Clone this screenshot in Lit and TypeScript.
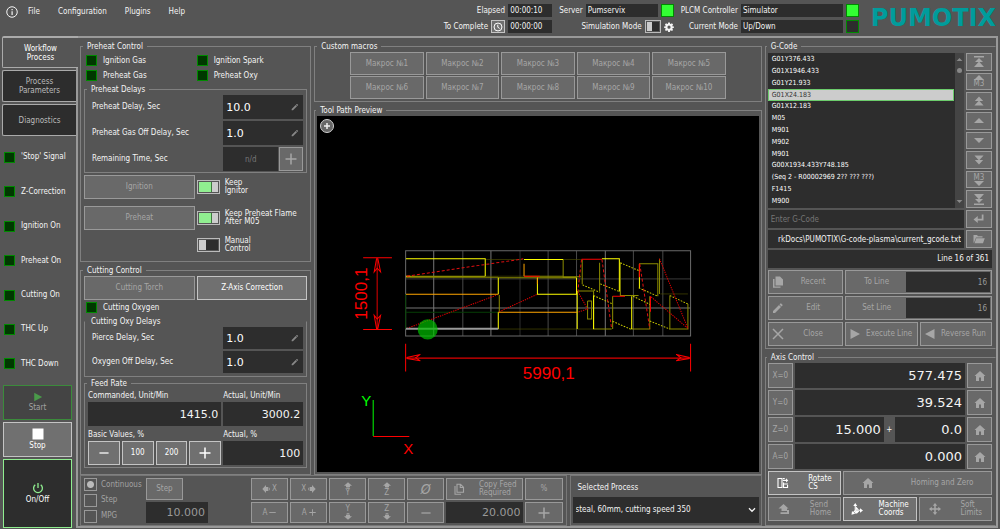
import { LitElement, html, css, svg } from "lit";
import { customElement, state } from "lit/decorators.js";
import { classMap } from "lit/directives/class-map.js";

const shapes: Record<string, unknown> = {
  info: svg`<circle cx="12" cy="12" r="10.5" fill="none" stroke="currentColor" stroke-width="2"/><path d="M11 10.5h2.4V18H11zM11 6h2.4v2.5H11z"/>`,
  clock: svg`<circle cx="12" cy="12" r="9.5" fill="none" stroke="currentColor" stroke-width="2.4"/><path d="M11.5 6.5V12.5l4.5 3" fill="none" stroke="currentColor" stroke-width="2.4"/>`,
  gear: svg`<path d="M10 1h4l.6 3.2 1.8.8L19 3.200l2.800 2.800-1.800 2.700.8 1.800L24 11v3l-3.200.600-.8 1.800 1.800 2.600L19 21.800l-2.600-1.800-1.800.8L14 24h-4l-.6-3.200-1.800-.8L5 21.800 2.200 19 4 16.400l-.8-1.800L0 14v-3l3.200-.5.8-1.800L2.200 6 5 3.200 7.600 5l1.800-.8zM12 8.500a3.800 3.800 0 100 7.600 3.800 3.800 0 000-7.600z" fill-rule="evenodd"/>`,
  pencil: svg`<path d="M2 18V22H6L18 10l-4-4zM21 7a1 1 0 000-1.400l-2.600-2.600a1 1 0 00-1.400 0l-2 2 4 4z"/>`,
  plus: svg`<path d="M10.500 1h3v9.500H23v3h-9.500V23h-3v-9.500H1v-3h9.500z"/>`,
  minus: svg`<path d="M1 10.500h22v3H1z"/>`,
  play: svg`<path d="M3 2v20l19-10z"/>`,
  back: svg`<path d="M21 2v20L2 12z"/>`,
  square: svg`<path d="M1 1h22v22H1z"/>`,
  power: svg`<path d="M12 2v10M6.500 5.500a8.800 8.800 0 1011 0" fill="none" stroke="currentColor" stroke-width="2.600"/>`,
  first: svg`<path d="M2 0h20v3H2zM12 4l8 8H4zM12 11l10 11H2z"/>`,
  upOne: svg`<path d="M12 7l10 10H2z"/>`,
  upTwo: svg`<path d="M12 1l10 11H2zM12 11l11 12H1z"/>`,
  downOne: svg`<path d="M12 17L2 7h20z"/>`,
  downTwo: svg`<path d="M12 23L2 12h20zM12 13L1 1h22z"/>`,
  last: svg`<path d="M2 21h20v3H2zM12 20l-8-8h16zM12 13L2 2h20z"/>`,
  enter: svg`<path d="M17.500 3H21v12H9.500v5L1 13l8.500-7v5.500h8z"/>`,
  folder: svg`<path d="M1 20V4h7l2 2.500h9V9H6L3 17zM6.500 10.500H23.500L20 20.500H3z"/>`,
  docs: svg`<path d="M7 1h9l6 6v12H7zM2 6h3v15h12v2.500H2z"/>`,
  close: svg`<path d="M2 2l20 20M22 2L2 22" stroke="currentColor" stroke-width="3"/>`,
  home: svg`<path d="M12 2l11 10h-3v10h-6v-7h-4v7H4V12H1z"/>`,
  rotate: svg`<path d="M2 3h8v18H2z" fill="none" stroke="currentColor" stroke-width="2.200"/><path d="M12 2h3.500v2H12zM11.500 5.500H18V2.500l4.500 4.500L18 11V8h-6.500zM12 13h10v2H12zM12 20h10v2.200H12zM12 11h2.200v11H12zM20 16h2.200v6H20z"/>`,
  send: svg`<path d="M11 2l10 9h-3v3h4v8H5v-3.500h13V16H7v-5H1z"/>`,
  coords: svg`<path d="M8.500 20V4M8.500 14.500h12M8.500 14.500L3 21" fill="none" stroke="currentColor" stroke-width="2.200"/><path d="M8.500 0l4 6h-8zM24 15l-6 4.500v-9zM1 23.500l1-7.500 6 5.500zM10 7l6 6.500h-6zM10 16h7l-5 5H7z"/>`,
  move: svg`<path d="M12 0l4.500 5.500h-3v5h5v-3L24 12l-5.500 4.500v-3h-5v5h3L12 24l-4.500-5.500h3v-5h-5v3L0 12l5.500-4.500v3h5v-5h-3z"/>`,
  copy: svg`<path d="M8 2.500h7l6 6v10H8zM14.500 3v6H21M4 6v16.500h12" fill="none" stroke="currentColor" stroke-width="2.200"/>`,
  arrowLeft: svg`<path d="M1 12L12 0v6h7v12h-7v6zM21 8h2v8h-2z"/>`,
  arrowRight: svg`<path d="M23 12L12 0v6H5v12h7v6zM1 8h2v8H1z"/>`,
  arrowUp: svg`<path d="M12 4l12 10h-6v5H6v-5H0zM8 20.500h8V23H8z"/>`,
  arrowDown: svg`<path d="M12 20L0 10h6V5h12v5h6zM8 1h8v2.500H8z"/>`,
  chevron: svg`<path d="M3 7l9 9 9-9" fill="none" stroke="currentColor" stroke-width="4"/>`,
};

const icon = (name: string, size = "s10") =>
  html`<svg class="icon ${size}" viewBox="0 0 24 24" fill="currentColor" aria-hidden="true">${shapes[name]}</svg>`;

const wedge = (name: string) =>
  html`<svg class="icon wedge" viewBox="2 7 20 10" fill="currentColor" aria-hidden="true">${shapes[name]}</svg>`;

@customElement("tool-path")
class ToolPath extends LitElement {
  static styles = css`
    :host { display: block; min-height: 0; background: #000; position: relative; }
    .scene { display: block; width: 100%; height: 100%; }
    .dim { font: 17px "Liberation Sans", sans-serif; fill: #f00; }
    .axis { font: 15px "Liberation Sans", sans-serif; }
    .zoom {
      position: absolute; left: 3px; top: 3px; width: 14px; height: 14px; box-sizing: border-box; padding: 0;
      border: 1px solid #d0d0d0; border-radius: 50%; background: #666; color: #eee;
      display: flex; align-items: center; justify-content: center;
    }
    .glyph { width: 6px; height: 6px; }
  `;
  render() {
    return html`
      <svg class="scene" viewBox="317 116 440 355" role="img" aria-label="Tool path">
        <g transform="translate(340 235) scale(.33333)" fill="none" stroke-width="3">
          <path stroke="#2e2e2e" d="M538 46V301M197 130H1048" />
          <path stroke="#484848" d="M367 46V301M622 46V301M707 46V301M877 46V301M965 46V301" />
          <path stroke="#757575" d="M280 46V301M451 46V301M793 46V301M197 217H1048" />
          <path stroke="#6a6a6a" d="M196 46H1048V301H196z" />
          <path stroke="#063f06" d="M197 230H473M196 176V279" />
          <path stroke="#4c4c00" stroke-width="2" d="M434 72H548M434 122H550M667 72H720M958 175H1040M590 127H707M473 280H707M840 180H893M709 280H760" />
          <path stroke="#8c8c00" d="M197 122H434M550 122H667M197 125H473M473 127H707M667 72V124H720M476 178V230M711 166H758V280M740 196H752V250H740V196M724 146V72M776 82V168M838 82V180H892M895 85H950V182M955 70V175M986 180V280H1040V205M815 182V280M870 280H926V182M758 180V280H812" />
          <path stroke="#ff0" d="M197 70H434V122M550 72H667M473 127V176M590 127V176H707V127M473 230V280M709 166V280M783 70H835V168M872 182V280M895 85V158M758 180V280" />
          <path stroke="#cc0" stroke-dasharray="5 4" d="M725 148L776 170M778 145L835 168M838 82L895 106M893 157L950 182M758 180L815 205M815 257L870 281M876 182L928 207M926 256L986 280M986 180L1042 206" />
          <path stroke="#ffa500" d="M197 176H473M473 230H709M197 122H210M550 85V122M590 127V145" />
          <path stroke="#e01010" stroke-dasharray="9 6" stroke-width="3" d="M200 122L548 70M722 72L711 166M783 72L812 280M896 85L926 280" />
          <path stroke="#e00000" stroke-dasharray="4 3" stroke-width="3" d="M200 278L470 178M476 228L590 176M711 168L740 220L711 230M930 184L1040 278M955 70L1040 278" />
          <path stroke="#f00" d="M722 71H783M815 182H852M928 182V228M895 85V125M550 122H597" />
          <path stroke="#9a9a9a" stroke-width="6" d="M197 279H473" />
          <circle cx="262" cy="281" r="30" fill="#00c000" fill-opacity=".7" />
          <path stroke="#f00" d="M69 67H155M69 281H155M196 324V407M1048 324V407" />
          <path stroke="#a80000" stroke-width="4" d="M111 70V278" />
          <path stroke="#e00000" stroke-width="4" d="M200 367H1044" />
          <path stroke="#f00" d="M102 109L109 70H113L121 109L111 98zM102 239L109 278H113L121 239L111 250zM240 356L200 365V368L240 375L226 366zM1005 356L1044 365V368L1005 375L1019 366z" />
        </g>
        <path d="M373 399V435" stroke="#0f0" /><path d="M373 435.500H409" stroke="#f00" />
        <text class="axis" x="361" y="405" fill="#0f0">Y</text>
        <text class="axis" x="403" y="453" fill="#f00">X</text>
        <text class="dim" x="548" y="378" text-anchor="middle">5990,1</text>
        <text class="dim" transform="translate(367 293) rotate(-90)" text-anchor="middle">1500,1</text>
      </svg>
      <button class="zoom" aria-label="Zoom in">
        <svg class="glyph" viewBox="0 0 6 6"><path d="M3 0V6M0 3H6" stroke="currentColor" stroke-width="1.500" /></svg>
      </button>
    `;
  }
}

@customElement("app-root")
class AppRoot extends LitElement {
  @state() private line = 3;
  @state() private jog = "Continuous";

  private readonly signals = ["'Stop' Signal", "Z-Correction", "Ignition On", "Preheat On", "Cutting On", "THC Up", "THC Down"];
  private readonly code = [
    "G01Y376.433", "G01X1946.433", "G01Y21.933", "G01X24.183", "G01X12.183", "M05", "M901", "M902", "M901",
    "G00X1934.433Y748.185", "(Seq 2 - R00002969 2?? ??? ???)", "F1415", "M900",
  ];

  static styles = css`
    :host {
      display: grid; grid-template-rows: auto minmax(0, 1fr); min-height: 100vh; box-sizing: border-box;
      background: #555; color: #f4f4f4; font: 8px/12px "DejaVu Sans Condensed", "DejaVu Sans", sans-serif;
      padding: 0 2px 2px 0;
    }
    * { box-sizing: border-box; }
    button, input, select { font: inherit; color: inherit; margin: 0; min-width: 0; border-radius: 0; }
    .icon { display: block; flex: none; width: 10px; height: 10px; }
    .s7 { width: 7px; height: 7px; } .s8 { width: 8px; height: 8px; } .s12 { width: 12px; height: 12px; }
    .wedge { width: 10px; height: 5px; }

    .header { display: flex; padding: 4px 2px 3px 6px; justify-content: space-between; }
    .menu { display: flex; height: 15px; align-items: center; }
    .menu a { color: inherit; text-decoration: none; margin-right: 18px; }
    .menu .icon { margin-right: 10px; }
    .status { display: grid; grid-template-columns: auto 44px auto 72px 13px auto 102px 13px; grid-auto-rows: 13px; gap: 3px; align-items: center; justify-items: end; margin-left: auto; }
    .status .tag { padding-left: 4px; display: flex; align-items: center; gap: 3px; }
    .status .wide { grid-column: span 3; }
    .status .box { width: 100%; height: 13px; padding: 0 2px; }
    .logo { color: #009c9c; font: bold 24px/28px "DejaVu Sans", sans-serif; width: 137px; text-align: right; height: 29px; }

    .box { display: block; width: 100%; height: 24px; border: 0; background: #2d2d2d; padding: 0 3px; outline: none; }
    .num { font: 11px/14px "DejaVu Sans", sans-serif; }
    .right { text-align: right; }
    .mute { text-align: center; color: #777; }
    .dim { color: #999; }
    .led { flex: none; width: 11px; height: 11px; background: #003800; border: 1px solid #008a00; }
    .lamp { width: 13px; height: 13px; }
    .on { background: #3f3; }
    .off { background: #2d2d2d; }
    .sig { display: flex; align-items: center; gap: 6px; }

    .btn {
      display: flex; align-items: center; justify-content: center; gap: 2px; height: 24px; padding: 0;
      background: #707070; border: 1px solid #c4c4c4; color: #fff; line-height: 8px; text-align: center; white-space: nowrap;
    }
    .btn:disabled { background: #696969; border-color: #999; color: #a6a6a6; }
    .btn.lead { display: grid; grid-template-columns: 12px minmax(0, 1fr); padding: 0 2px 0 3px; justify-items: center; }
    .btn.duo { text-align: left; justify-content: space-around; }
    .switch {
      appearance: none; flex: none; width: 23px; height: 14px; border: 1px solid #bbb; padding: 1px;
      background: linear-gradient(to right, #ccc 7px, #2d2d2d 7px) content-box #555;
    }
    .switch:checked { background: linear-gradient(to right, #90ee90 12px, #3f7a3f 12px 13px, #ccc 13px) content-box #555; }
    .mini { width: 16px; height: 13px; background: linear-gradient(to right, #ccc 5px, #2d2d2d 5px) content-box #555; }
    .clock { width: 14px; height: 13px; }

    .body { display: grid; grid-template-columns: 76px minmax(0, 1fr); min-height: 0; }
    .side { display: flex; flex-direction: column; padding-left: 2px; }
    .tabs { display: grid; grid-auto-rows: 32px; gap: 2px; }
    .tab { background: #2d2d2d; border: 1px solid #aaa; border-right: 0; border-radius: 2px 0 0 2px; color: #bbb; line-height: 9px; padding: 0; }
    .tab.current { background: #555; color: #fff; border-top-width: 2px; margin-right: -2px; position: relative; z-index: 1; }
    .signals { flex: 1; display: grid; grid-auto-rows: 1fr; padding: 4px 2px; }
    .run { display: grid; gap: 2px; padding: 0 4px 0 1px; grid-template-rows: 35px 35px 69px; }
    .run .btn { flex-direction: column; height: 100%; gap: 1px; line-height: 10px; }
    .run .start { background: #444; border-color: #3b8b3b; color: #a2a2a2; }
    .start .icon { color: #4a9a4a; }
    .run .power { background: #2d2d2d; border-color: #90ee90; }
    .power .icon { color: #90ee90; }

    .frame { border: 2px solid #999; display: grid; grid-template-columns: minmax(0, 681fr) minmax(0, 231fr); gap: 3px; padding: 2px 0 0 2px; }
    .work { display: flex; flex-direction: column; min-width: 0; }
    .upper { flex: 1; display: grid; grid-template-columns: minmax(0, 231fr) minmax(0, 447fr); gap: 3px; }
    .lower { display: grid; grid-template-columns: minmax(0, 486fr) minmax(0, 192fr); gap: 3px; }
    .col { display: flex; flex-direction: column; gap: 2px; min-width: 0; }
    .group { margin: 0; border: 1px solid #808080; padding: 0 3px; min-width: 0; }
    .group > legend { padding: 0 4px; margin-left: -1px; height: 12px; line-height: 14px; }
    .grow { flex: 1; }

    .leds { display: grid; grid-template-columns: 1fr 1fr; grid-auto-rows: 15px; padding-left: 2px; }
    .lamps { padding-top: 1px; }
    .rows { display: grid; gap: 2px; padding-bottom: 1px; }
    .field { display: grid; grid-template-columns: minmax(0, 1fr) 80px; align-items: center; padding-left: 4px; }
    .edit { display: grid; grid-template-columns: minmax(0, 1fr) 12px; align-items: center; background: #2d2d2d; color: #888; }
    .edit .box { color: #fff; }
    .split { display: grid; grid-template-columns: minmax(0, 1fr) 24px; gap: 1px; }
    .flags { display: grid; grid-template-columns: 1fr 1fr; row-gap: 7px; column-gap: 2px; padding: 2px 0 8px; align-items: center; }
    .flag { display: flex; align-items: center; gap: 5px; line-height: 8px; grid-column: 2; height: 16px; }
    .pair { display: grid; grid-template-columns: 1fr 1fr; gap: 2px; }
    .delays { border-top-color: transparent; padding: 0 3px 2px; }
    .delays .box, .delays .edit { height: 22px; }
    .feed { display: grid; grid-template-columns: minmax(0, 1fr) 80px; column-gap: 2px; padding: 1px 0 2px; }
    .gap { margin-top: 3px; }
    .steps { display: grid; grid-template-columns: repeat(4, minmax(0, 1fr)); gap: 2px; }

    .macros { display: grid; grid-template-columns: repeat(5, minmax(0, 1fr)); gap: 1px 2px; padding: 0 32px 2px; }
    .macros .btn { height: 23px; }
    .preview { display: flex; flex-direction: column; padding: 0 2px 2px; flex: 1; }
    .preview tool-path { flex: 1; height: 354px; }

    .panel { border: 1px solid #777; padding: 2px 3px; }
    .jog { display: grid; grid-template-columns: 62px 62px minmax(0, 1fr); }
    .modes { display: grid; grid-auto-rows: 1fr; gap: 2px; color: #a2a2a2; }
    .modes label { display: flex; align-items: center; gap: 4px; height: 13px; }
    .radio { appearance: none; width: 13px; height: 13px; border: 1px solid #999; background: #555; }
    .radio:checked { background: radial-gradient(circle, #bbb 3px, #555 4px); }
    .stepper { display: grid; grid-template-rows: 22px 21px; gap: 2px; }
    .stepper .btn { width: 37px; height: 22px; }
    .stepper .box { height: 21px; }
    .keys { display: grid; grid-template-columns: repeat(5, minmax(0, 37fr)) minmax(0, 77fr) minmax(0, 37fr); grid-template-rows: 22px 21px; gap: 2px; padding-left: 43px; }
    .keys .btn, .keys .box { height: 100%; }
    .keys .stack { flex-direction: column; gap: 0; }
    .keys .big { font-size: 14px; font-style: italic; }
    .process { padding: 6px 2px 2px; display: flex; flex-direction: column; justify-content: space-between; }
    .process label { padding-left: 5px; }
    .pick { position: relative; }
    .pick .box { appearance: none; height: 26px; }
    .pick .icon { position: absolute; right: 3px; top: 9px; pointer-events: none; }

    .open { border-right-color: transparent; padding: 0 3px 2px 2px; }
    .gcode { display: grid; grid-template-columns: minmax(0, 1fr) 26px; gap: 2px; padding-top: 1px; }
    .list { background: #2d2d2d; display: grid; grid-template-columns: minmax(0, 1fr) 9px; column-gap: 1px; height: 155px; }
    .lines { margin: 0; padding: 1px 0; list-style: none; display: grid; grid-auto-rows: 1fr; min-height: 0; font-size: 7px; }
    .item { padding: 0 3px; border: 1px solid transparent; display: flex; align-items: center; color: #fff; line-height: 9px; cursor: default; }
    .item.sel { background: #ccc; border-color: #6ccc6c; color: #333; }
    .scroll { background: #444; color: #888; display: flex; flex-direction: column; align-items: center; padding: 3px 0; }
    .thumb { width: 5px; height: 5px; border-radius: 50%; background: #888; margin: 5px 0 auto; }
    .nav { display: grid; grid-auto-rows: minmax(0, 1fr); gap: 2px; }
    .nav .btn { height: 100%; flex-direction: column; gap: 0; line-height: 7px; }
    .short { height: 18px; }
    .info { margin: 2px 0; line-height: 18px; }
    .trio { display: grid; grid-template-columns: 76fr 147fr; gap: 2px; }
    .combo { display: grid; grid-template-columns: minmax(0, 1fr) 84px; height: 24px; background: #696969; border: 1px solid #999; color: #a6a6a6; padding: 1px; align-items: center; }
    .combo button { background: none; border: 0; color: inherit; padding: 0; }
    .combo .box { height: 20px; }
    .axes { display: grid; gap: 2px; }
    .axis { display: grid; grid-template-columns: 25px minmax(0, 1fr) 25px; gap: 2px; }
    .axis .btn, .axis .box { height: 25px; }
    .axis .num { font-size: 13px; }
    .sum { display: grid; grid-template-columns: minmax(0, 90fr) 11px minmax(0, 71fr); align-items: center; text-align: center; }
    .thirds { display: grid; grid-template-columns: repeat(3, minmax(0, 1fr)); gap: 2px; }
    .span2 { grid-column: span 2; }
  `;

  private led(text: string) {
    return html`<div class="sig"><span class="led"></span><span>${text}</span></div>`;
  }

  private delay(id: string, text: string, value: string) {
    return html`<div class="field">
      <label for=${id}>${text}</label>
      <div class="edit"><input class="box num" id=${id} .value=${value} />${icon("pencil", "s8")}</div>
    </div>`;
  }

  private axisRow(name: string, value: unknown) {
    return html`<div class="axis">
      <button class="btn" disabled>${name}=0</button>${value}
      <button class="btn" disabled aria-label="Home ${name}">${icon("home", "s12")}</button>
    </div>`;
  }

  private axisBox(name: string, value: string) {
    return html`<input class="box num right" aria-label=${name} .value=${value} />`;
  }

  private header() {
    return html`<header class="header">
      <nav class="menu">
        ${icon("info", "s12")}<a href="#">File</a><a href="#">Configuration</a><a href="#">Plugins</a><a href="#">Help</a>
      </nav>
      <div class="status">
        <label class="tag" for="elapsed">Elapsed</label><input class="box" id="elapsed" readonly value="00:00:10" />
        <label class="tag" for="server">Server</label><input class="box" id="server" readonly value="Pumservix" /><span class="led lamp on"></span>
        <label class="tag" for="plcm">PLCM Controller</label><input class="box" id="plcm" readonly value="Simulator" /><span class="led lamp on"></span>
        <span class="tag"><label for="left">To Complete</label><button class="btn clock" aria-label="Time">${icon("clock")}</button></span>
        <input class="box" id="left" readonly value="00:00:00" />
        <span class="tag wide"><label for="sim">Simulation Mode</label><input class="switch mini" type="checkbox" id="sim" />${icon("gear")}</span>
        <label class="tag" for="mode">Current Mode</label><input class="box" id="mode" readonly value="Up/Down" /><span class="led lamp off"></span>
      </div>
      <div class="logo">PUMOTIX</div>
    </header>`;
  }

  private sidebar() {
    return html`<aside class="side">
      <div class="tabs">
        <button class="tab current">Workflow<br />Process</button>
        <button class="tab">Process<br />Parameters</button>
        <button class="tab">Diagnostics</button>
      </div>
      <div class="signals">${this.signals.map((s) => this.led(s))}</div>
      <div class="run">
        <button class="btn start" disabled>${icon("play")}Start</button>
        <button class="btn">${icon("square", "s12")}Stop</button>
        <button class="btn power">${icon("power", "s12")}On/Off</button>
      </div>
    </aside>`;
  }

  private process() {
    return html`<div class="col">
      <fieldset class="group">
        <legend>Preheat Control</legend>
        <div class="leds lamps">${["Ignition Gas", "Ignition Spark", "Preheat Gas", "Preheat Oxy"].map((s) => this.led(s))}</div>
        <fieldset class="group">
          <legend>Preheat Delays</legend>
          <div class="rows">
            ${this.delay("pd", "Preheat Delay, Sec", "10.0")} ${this.delay("pg", "Preheat Gas Off Delay, Sec", "1.0")}
            <div class="field">
              <label for="rt">Remaining Time, Sec</label>
              <div class="split">
                <input class="box mute" id="rt" disabled value="n/d" />
                <button class="btn" disabled aria-label="Add time">${icon("plus", "s12")}</button>
              </div>
            </div>
          </div>
        </fieldset>
        <div class="flags">
          <button class="btn" disabled>Ignition</button>
          <label class="flag"><input class="switch" type="checkbox" checked /><span>Keep<br />Ignitor</span></label>
          <button class="btn" disabled>Preheat</button>
          <label class="flag"><input class="switch" type="checkbox" checked /><span>Keep Preheat Flame<br />After M05</span></label>
          <label class="flag"><input class="switch" type="checkbox" /><span>Manual<br />Control</span></label>
        </div>
      </fieldset>
      <fieldset class="group grow">
        <legend>Cutting Control</legend>
        <div class="pair">
          <button class="btn" disabled>Cutting Torch</button>
          <button class="btn">Z-Axis Correction</button>
        </div>
        <div class="leds">${this.led("Cutting Oxygen")}</div>
        <fieldset class="group delays">
          <legend>Cutting Oxy Delays</legend>
          <div class="rows">${this.delay("pi", "Pierce Delay, Sec", "1.0")} ${this.delay("ox", "Oxygen Off Delay, Sec", "1.0")}</div>
        </fieldset>
        <fieldset class="group">
          <legend>Feed Rate</legend>
          <div class="feed">
            <label for="cmd">Commanded, Unit/Min</label><label for="act">Actual, Unit/Min</label>
            <input class="box num right" id="cmd" value="1415.0" /><input class="box num right" id="act" readonly value="3000.2" />
            <span class="gap">Basic Values, %</span><label class="gap" for="pct">Actual, %</label>
            <div class="steps">
              <button class="btn" aria-label="Less">${icon("minus")}</button><button class="btn">100</button>
              <button class="btn">200</button><button class="btn" aria-label="More">${icon("plus", "s12")}</button>
            </div>
            <input class="box num right" id="pct" readonly value="100" />
          </div>
        </fieldset>
      </fieldset>
    </div>`;
  }

  private center() {
    return html`<div class="col">
      <fieldset class="group">
        <legend>Custom macros</legend>
        <div class="macros">${Array.from({ length: 10 }, (_, i) => html`<button class="btn" disabled>Макрос №${i + 1}</button>`)}</div>
      </fieldset>
      <fieldset class="group preview">
        <legend>Tool Path Preview</legend>
        <tool-path></tool-path>
      </fieldset>
    </div>`;
  }

  private jogBar() {
    return html`<div class="lower">
      <div class="panel jog">
        <div class="modes">
          ${["Continuous", "Step", "MPG"].map(
            (m) => html`<label><input class="radio" type="radio" name="jog" .checked=${this.jog === m} @change=${() => (this.jog = m)} />${m}</label>`
          )}
        </div>
        <div class="stepper">
          <button class="btn" disabled>Step</button>
          <input class="box num right dim" aria-label="Step size" value="10.000" />
        </div>
        <div class="keys">
          <button class="btn" disabled>${icon("arrowLeft", "s8")}X</button>
          <button class="btn" disabled>X${icon("arrowRight", "s8")}</button>
          <button class="btn stack" disabled>${icon("arrowUp", "s8")}Y</button>
          <button class="btn stack" disabled>${icon("arrowUp", "s8")}Z</button>
          <button class="btn big" disabled>Ø</button>
          <button class="btn duo" disabled>${icon("copy", "s12")}<span>Copy Feed<br />Required</span></button>
          <button class="btn" disabled>%</button>
          <button class="btn" disabled>A${icon("minus", "s7")}</button>
          <button class="btn" disabled>A${icon("plus", "s7")}</button>
          <button class="btn stack" disabled>Y${icon("arrowDown", "s8")}</button>
          <button class="btn stack" disabled>Z${icon("arrowDown", "s8")}</button>
          <button class="btn" disabled aria-label="Less">${icon("minus")}</button>
          <input class="box num right dim" aria-label="Jog feed" value="20.000" />
          <button class="btn" disabled aria-label="More">${icon("plus", "s12")}</button>
        </div>
      </div>
      <div class="panel process">
        <label for="proc">Selected Process</label>
        <div class="pick">
          <select class="box" id="proc"><option>steal, 60mm, cutting speed 350</option></select>${icon("chevron", "s8")}
        </div>
      </div>
    </div>`;
  }

  private right() {
    return html`<div class="col">
      <fieldset class="group open">
        <legend>G-Code</legend>
        <div class="gcode">
          <div class="list">
            <ul class="lines">
              ${this.code.map((c, i) => html`<li class=${classMap({ item: true, sel: i === this.line })} @click=${() => (this.line = i)}>${c}</li>`)}
            </ul>
            <div class="scroll">${icon("upOne", "s7")}<span class="thumb"></span>${icon("downOne", "s7")}</div>
          </div>
          <div class="nav">
            <button class="btn" disabled aria-label="First">${icon("first", "s12")}</button>
            <button class="btn" disabled>${wedge("upOne")}M3</button>
            <button class="btn" disabled aria-label="Page up">${icon("upTwo")}</button>
            <button class="btn" disabled aria-label="Up">${wedge("upOne")}</button>
            <button class="btn" disabled aria-label="Down">${wedge("downOne")}</button>
            <button class="btn" disabled aria-label="Page down">${icon("downTwo")}</button>
            <button class="btn" disabled>M3${wedge("downOne")}</button>
            <button class="btn" disabled aria-label="Last">${icon("last", "s12")}</button>
          </div>
          <input class="box short" aria-label="Enter G-Code" placeholder="Enter G-Code" />
          <button class="btn short" disabled aria-label="Run">${icon("enter", "s12")}</button>
          <input class="box short right" aria-label="File" readonly value="rkDocs\\PUMOTIX\\G-code-plasma\\current_gcode.txt" />
          <button class="btn short" disabled aria-label="Open">${icon("folder", "s12")}</button>
        </div>
        <div class="box short right info">Line 16 of 361</div>
        <div class="trio">
          <button class="btn lead" disabled>${icon("docs", "s12")}<span>Recent</span></button>
          <div class="combo"><button disabled>To Line</button><input class="box right dim" aria-label="To line" value="16" /></div>
          <button class="btn lead" disabled>${icon("pencil", "s12")}<span>Edit</span></button>
          <div class="combo"><button disabled>Set Line</button><input class="box right dim" aria-label="Set line" value="16" /></div>
          <button class="btn lead" disabled>${icon("close", "s12")}<span>Close</span></button>
          <div class="pair">
            <button class="btn lead" disabled>${icon("play", "s12")}<span>Execute Line</span></button>
            <button class="btn lead" disabled>${icon("back", "s12")}<span>Reverse Run</span></button>
          </div>
        </div>
      </fieldset>
      <fieldset class="group open grow">
        <legend>Axis Control</legend>
        <div class="axes">
          ${this.axisRow("X", this.axisBox("X", "577.475"))} ${this.axisRow("Y", this.axisBox("Y", "39.524"))}
          ${this.axisRow("Z", html`<div class="sum">${this.axisBox("Z", "15.000")}<span>+</span>${this.axisBox("Z offset", "0.0")}</div>`)}
          ${this.axisRow("A", this.axisBox("A", "0.000"))}
          <div class="thirds">
            <button class="btn duo">${icon("rotate", "s12")}<span>Rotate<br />CS</span></button>
            <button class="btn duo span2" disabled>${icon("home", "s12")}<span>Homing and Zero</span></button>
            <button class="btn duo" disabled>${icon("send", "s12")}<span>Send<br />Home</span></button>
            <button class="btn duo">${icon("coords", "s12")}<span>Machine<br />Coords</span></button>
            <button class="btn duo" disabled>${icon("move", "s12")}<span>Soft<br />Limits</span></button>
          </div>
        </div>
      </fieldset>
    </div>`;
  }

  render() {
    return html`${this.header()}
      <div class="body">
        ${this.sidebar()}
        <main class="frame">
          <div class="work">
            <div class="upper">${this.process()} ${this.center()}</div>
            ${this.jogBar()}
          </div>
          ${this.right()}
        </main>
      </div>`;
  }
}
